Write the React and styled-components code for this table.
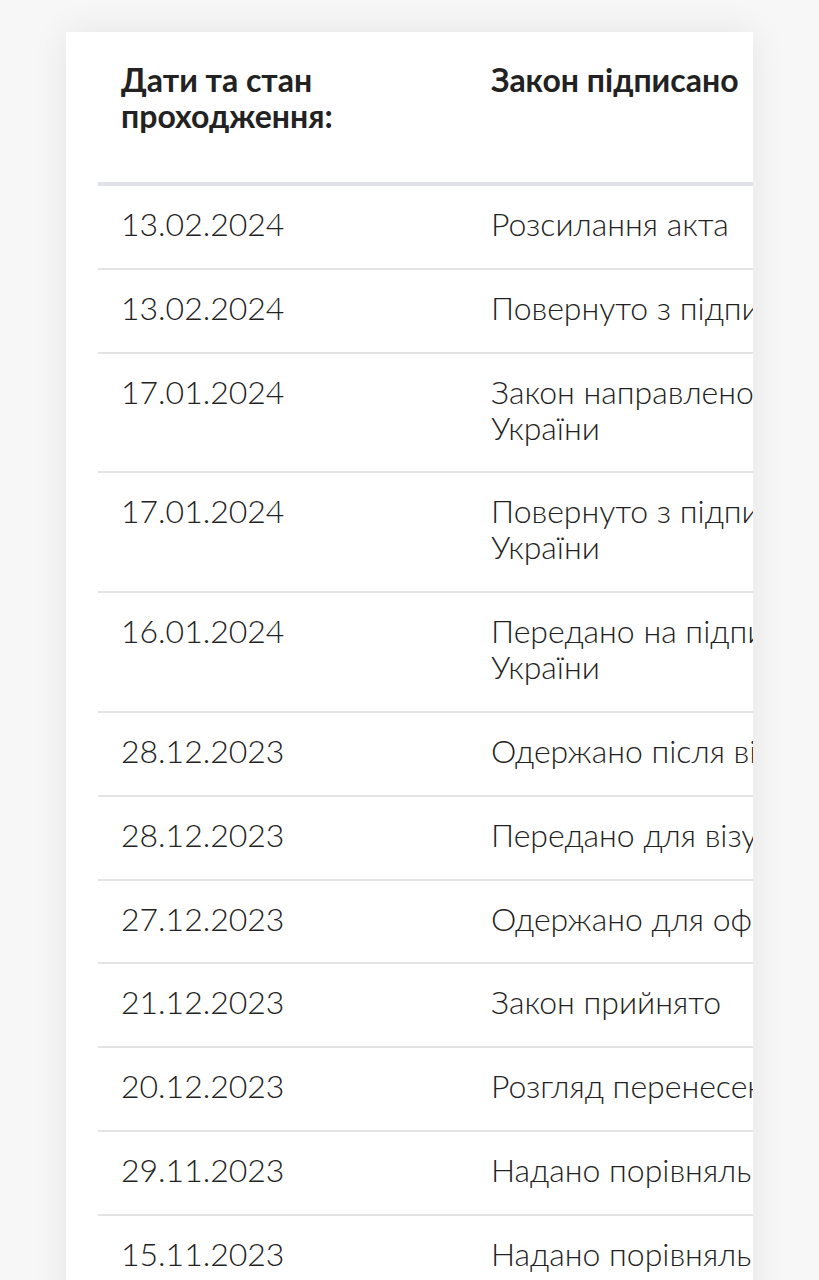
import React from "react";
import styled, { createGlobalStyle } from "styled-components";

const GlobalStyle = createGlobalStyle`
  html, body {
    margin: 0;
    padding: 0;
    background: #f7f7f7;
  }
  body {
    font-family: Lato, "Noto Sans", sans-serif;
    color: #252525;
  }
`;

const Page = styled.div`
  height: 1280px;
  overflow: hidden;
  padding: 32px 66px 0 66px;
  box-sizing: border-box;
`;

const Card = styled.div`
  background: #fff;
  box-shadow: 0 0 34px rgba(0, 0, 0, 0.08);
  padding-left: 32px;
  overflow: hidden;
  min-height: 1400px;
`;

const Table = styled.table`
  border-collapse: collapse;
  table-layout: fixed;
  width: 1100px;
`;

const Col = styled.col`
  width: ${(p) => p.w}px;
`;

const HeadCell = styled.th`
  text-align: left;
  vertical-align: top;
  font-weight: 700;
  font-size: 32px;
  line-height: 36px;
  padding: 30px 0 48px 23px;
  border-bottom: 4px solid #dee2e6;
  color: #222;
`;

const Row = styled.tr`
  border-bottom: 2px solid #e3e3e3;
`;

const Cell = styled.td`
  vertical-align: top;
  font-size: 32px;
  font-weight: 300;
  line-height: 36px;
  padding: 20px 0 25.8px 23px;
  white-space: nowrap;
  color: #222;
`;

const Line = styled.div``;

const rows = [
  ["13.02.2024", ["Розсилання акта"]],
  ["13.02.2024", ["Повернуто з підпису від Президента України"]],
  ["17.01.2024", ["Закон направлено на підпис Президенту", "України"]],
  ["17.01.2024", ["Повернуто з підпису від Голови Верховної Ради", "України"]],
  ["16.01.2024", ["Передано на підпис Голові Верховної Ради", "України"]],
  ["28.12.2023", ["Одержано після візування"]],
  ["28.12.2023", ["Передано для візування"]],
  ["27.12.2023", ["Одержано для оформлення"]],
  ["21.12.2023", ["Закон прийнято"]],
  ["20.12.2023", ["Розгляд перенесено"]],
  ["29.11.2023", ["Надано порівняльну таблицю"]],
  ["15.11.2023", ["Надано порівняльну таблицю"]],
];

export default function App() {
  return (
    <Page>
      <GlobalStyle />
      <Card>
        <Table>
          <colgroup>
            <Col w={370} />
            <Col w={730} />
          </colgroup>
          <thead>
            <tr>
              <HeadCell>
                Дати та стан
                <br />
                проходження:
              </HeadCell>
              <HeadCell>Закон підписано</HeadCell>
            </tr>
          </thead>
          <tbody>
            {rows.map(([date, lines], i) => (
              <Row key={i}>
                <Cell>{date}</Cell>
                <Cell>
                  {lines.map((l, j) => (
                    <Line key={j}>{l}</Line>
                  ))}
                </Cell>
              </Row>
            ))}
          </tbody>
        </Table>
      </Card>
    </Page>
  );
}
